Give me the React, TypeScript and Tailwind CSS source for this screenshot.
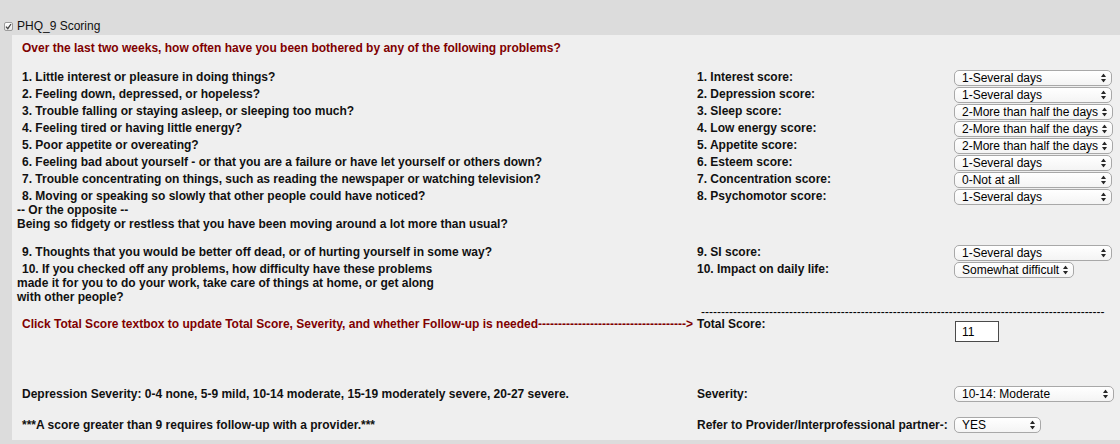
import React from "react";

function Arrows() {
  return (
    <svg width="5" height="9" viewBox="0 0 5 9" className="absolute right-[5px] top-1/2 -translate-y-1/2">
      <path d="M0 3.6 L2.5 0 L5 3.6 Z" fill="#262626" />
      <path d="M0 5.4 L2.5 9 L5 5.4 Z" fill="#262626" />
    </svg>
  );
}

function Sel({ value, w }: { value: string; w: string }) {
  return (
    <div
      className={`relative flex h-[16px] items-center rounded-[5px] border border-[#a8a8a8] bg-gradient-to-b from-white to-[#f4f4f4] pl-[7px] text-[12px] font-normal leading-[14px] text-black ${w}`}
    >
      <span className="whitespace-nowrap">{value}</span>
      <Arrows />
    </div>
  );
}

const rows: { q: React.ReactNode; label: string; value: string; w: string }[] = [
  { q: "1. Little interest or pleasure in doing things?", label: "1. Interest score:", value: "1-Several days", w: "w-[158px]" },
  { q: "2. Feeling down, depressed, or hopeless?", label: "2. Depression score:", value: "1-Several days", w: "w-[158px]" },
  { q: "3. Trouble falling or staying asleep, or sleeping too much?", label: "3. Sleep score:", value: "2-More than half the days", w: "w-[159px]" },
  { q: "4. Feeling tired or having little energy?", label: "4. Low energy score:", value: "2-More than half the days", w: "w-[159px]" },
  { q: "5. Poor appetite or overeating?", label: "5. Appetite score:", value: "2-More than half the days", w: "w-[159px]" },
  { q: "6. Feeling bad about yourself - or that you are a failure or have let yourself or others down?", label: "6. Esteem score:", value: "1-Several days", w: "w-[158px]" },
  { q: "7. Trouble concentrating on things, such as reading the newspaper or watching television?", label: "7. Concentration score:", value: "0-Not at all", w: "w-[158px]" },
];

export default function App() {
  return (
    <div className="h-[444px] w-[1120px] overflow-hidden bg-[#dcdcdc] font-['Liberation_Sans',Arial,sans-serif] text-[12px] text-[#111]">
      <div className="flex h-[35px] items-start pl-[4px] pt-[19px]">
        <div className="mt-[3px] flex h-[9px] w-[9px] items-center justify-center rounded-[2px] border border-[#9c9c9c] bg-gradient-to-b from-white to-[#e9e9e9]">
          <svg width="7" height="7" viewBox="0 0 7 7">
            <path d="M1 3.6 L2.8 5.6 L6 1" stroke="#444" strokeWidth="1.3" fill="none" />
          </svg>
        </div>
        <span className="ml-[4px] leading-[14px] text-[#111]">PHQ_9 Scoring</span>
      </div>

      <div className="ml-[12px] h-[405px] bg-[#efefef] pl-[5px] pt-[6px] font-bold">
        <div className="pl-[5px] leading-[14px] text-[#800000]">
          Over the last two weeks, how often have you been bothered by any of the following problems?
        </div>

        <div className="mt-[15px]">
          {rows.map((r, i) => (
            <div key={i} className="grid h-[17px] grid-cols-[680px_257px_1fr] items-start">
              <div className="pl-[5px] leading-[14px] whitespace-nowrap">{r.q}</div>
              <div className="leading-[14px]">{r.label}</div>
              <Sel value={r.value} w={r.w} />
            </div>
          ))}
          <div className="grid h-[45px] grid-cols-[680px_257px_1fr] items-start">
            <div className="leading-[14px]">
              <div className="pl-[5px]">8. Moving or speaking so slowly that other people could have noticed?</div>
              <div>-- Or the opposite --</div>
              <div>Being so fidgety or restless that you have been moving around a lot more than usual?</div>
            </div>
            <div className="leading-[14px]">8. Psychomotor score:</div>
            <Sel value="1-Several days" w="w-[158px]" />
          </div>
        </div>

        <div className="mt-[11px]">
          <div className="grid h-[17px] grid-cols-[680px_257px_1fr] items-start">
            <div className="pl-[5px] leading-[14px]">9. Thoughts that you would be better off dead, or of hurting yourself in some way?</div>
            <div className="leading-[14px]">9. SI score:</div>
            <Sel value="1-Several days" w="w-[158px]" />
          </div>
          <div className="grid h-[42px] grid-cols-[680px_257px_1fr] items-start">
            <div className="leading-[14px]">
              <div className="pl-[5px]">10. If you checked off any problems, how difficulty have these problems</div>
              <div>made it for you to do your work, take care of things at home, or get along</div>
              <div>with other people?</div>
            </div>
            <div className="leading-[14px]">10. Impact on daily life:</div>
            <Sel value="Somewhat difficult" w="w-[120px]" />
          </div>
        </div>

        <div className="mt-[1px] grid h-[12px] grid-cols-[680px_1fr] items-start">
          <div />
          <div className="ml-[4px] whitespace-nowrap font-normal leading-[14px] text-black">
            {"-".repeat(101)}
          </div>
        </div>

        <div className="grid h-[25px] grid-cols-[680px_257px_1fr] items-start">
          <div className="pl-[5px] leading-[14px] whitespace-nowrap text-[#800000]">
            {"Click Total Score textbox to update Total Score, Severity, and whether Follow-up is needed" + "-".repeat(37) + ">"}
          </div>
          <div className="leading-[14px]">Total Score:</div>
          <div className="ml-[1px] mt-[4px] flex h-[21px] w-[44px] items-center border border-[#4a4a4a] bg-white pl-[6px] font-normal text-black">
            11
          </div>
        </div>

        <div className="mt-[44px] grid h-[17px] grid-cols-[680px_257px_1fr] items-start">
          <div className="pl-[5px] pt-[1px] leading-[14px]">
            Depression Severity: 0-4 none, 5-9 mild, 10-14 moderate, 15-19 moderately severe, 20-27 severe.
          </div>
          <div className="pt-[1px] leading-[14px]">Severity:</div>
          <Sel value="10-14: Moderate" w="w-[160px]" />
        </div>

        <div className="mt-[14px] grid h-[17px] grid-cols-[680px_257px_1fr] items-start">
          <div className="pl-[5px] pt-[1px] leading-[14px]">***A score greater than 9 requires follow-up with a provider.***</div>
          <div className="pt-[1px] leading-[14px] whitespace-nowrap">Refer to Provider/Interprofessional partner-:</div>
          <Sel value="YES" w="w-[87px]" />
        </div>
      </div>
    </div>
  );
}
